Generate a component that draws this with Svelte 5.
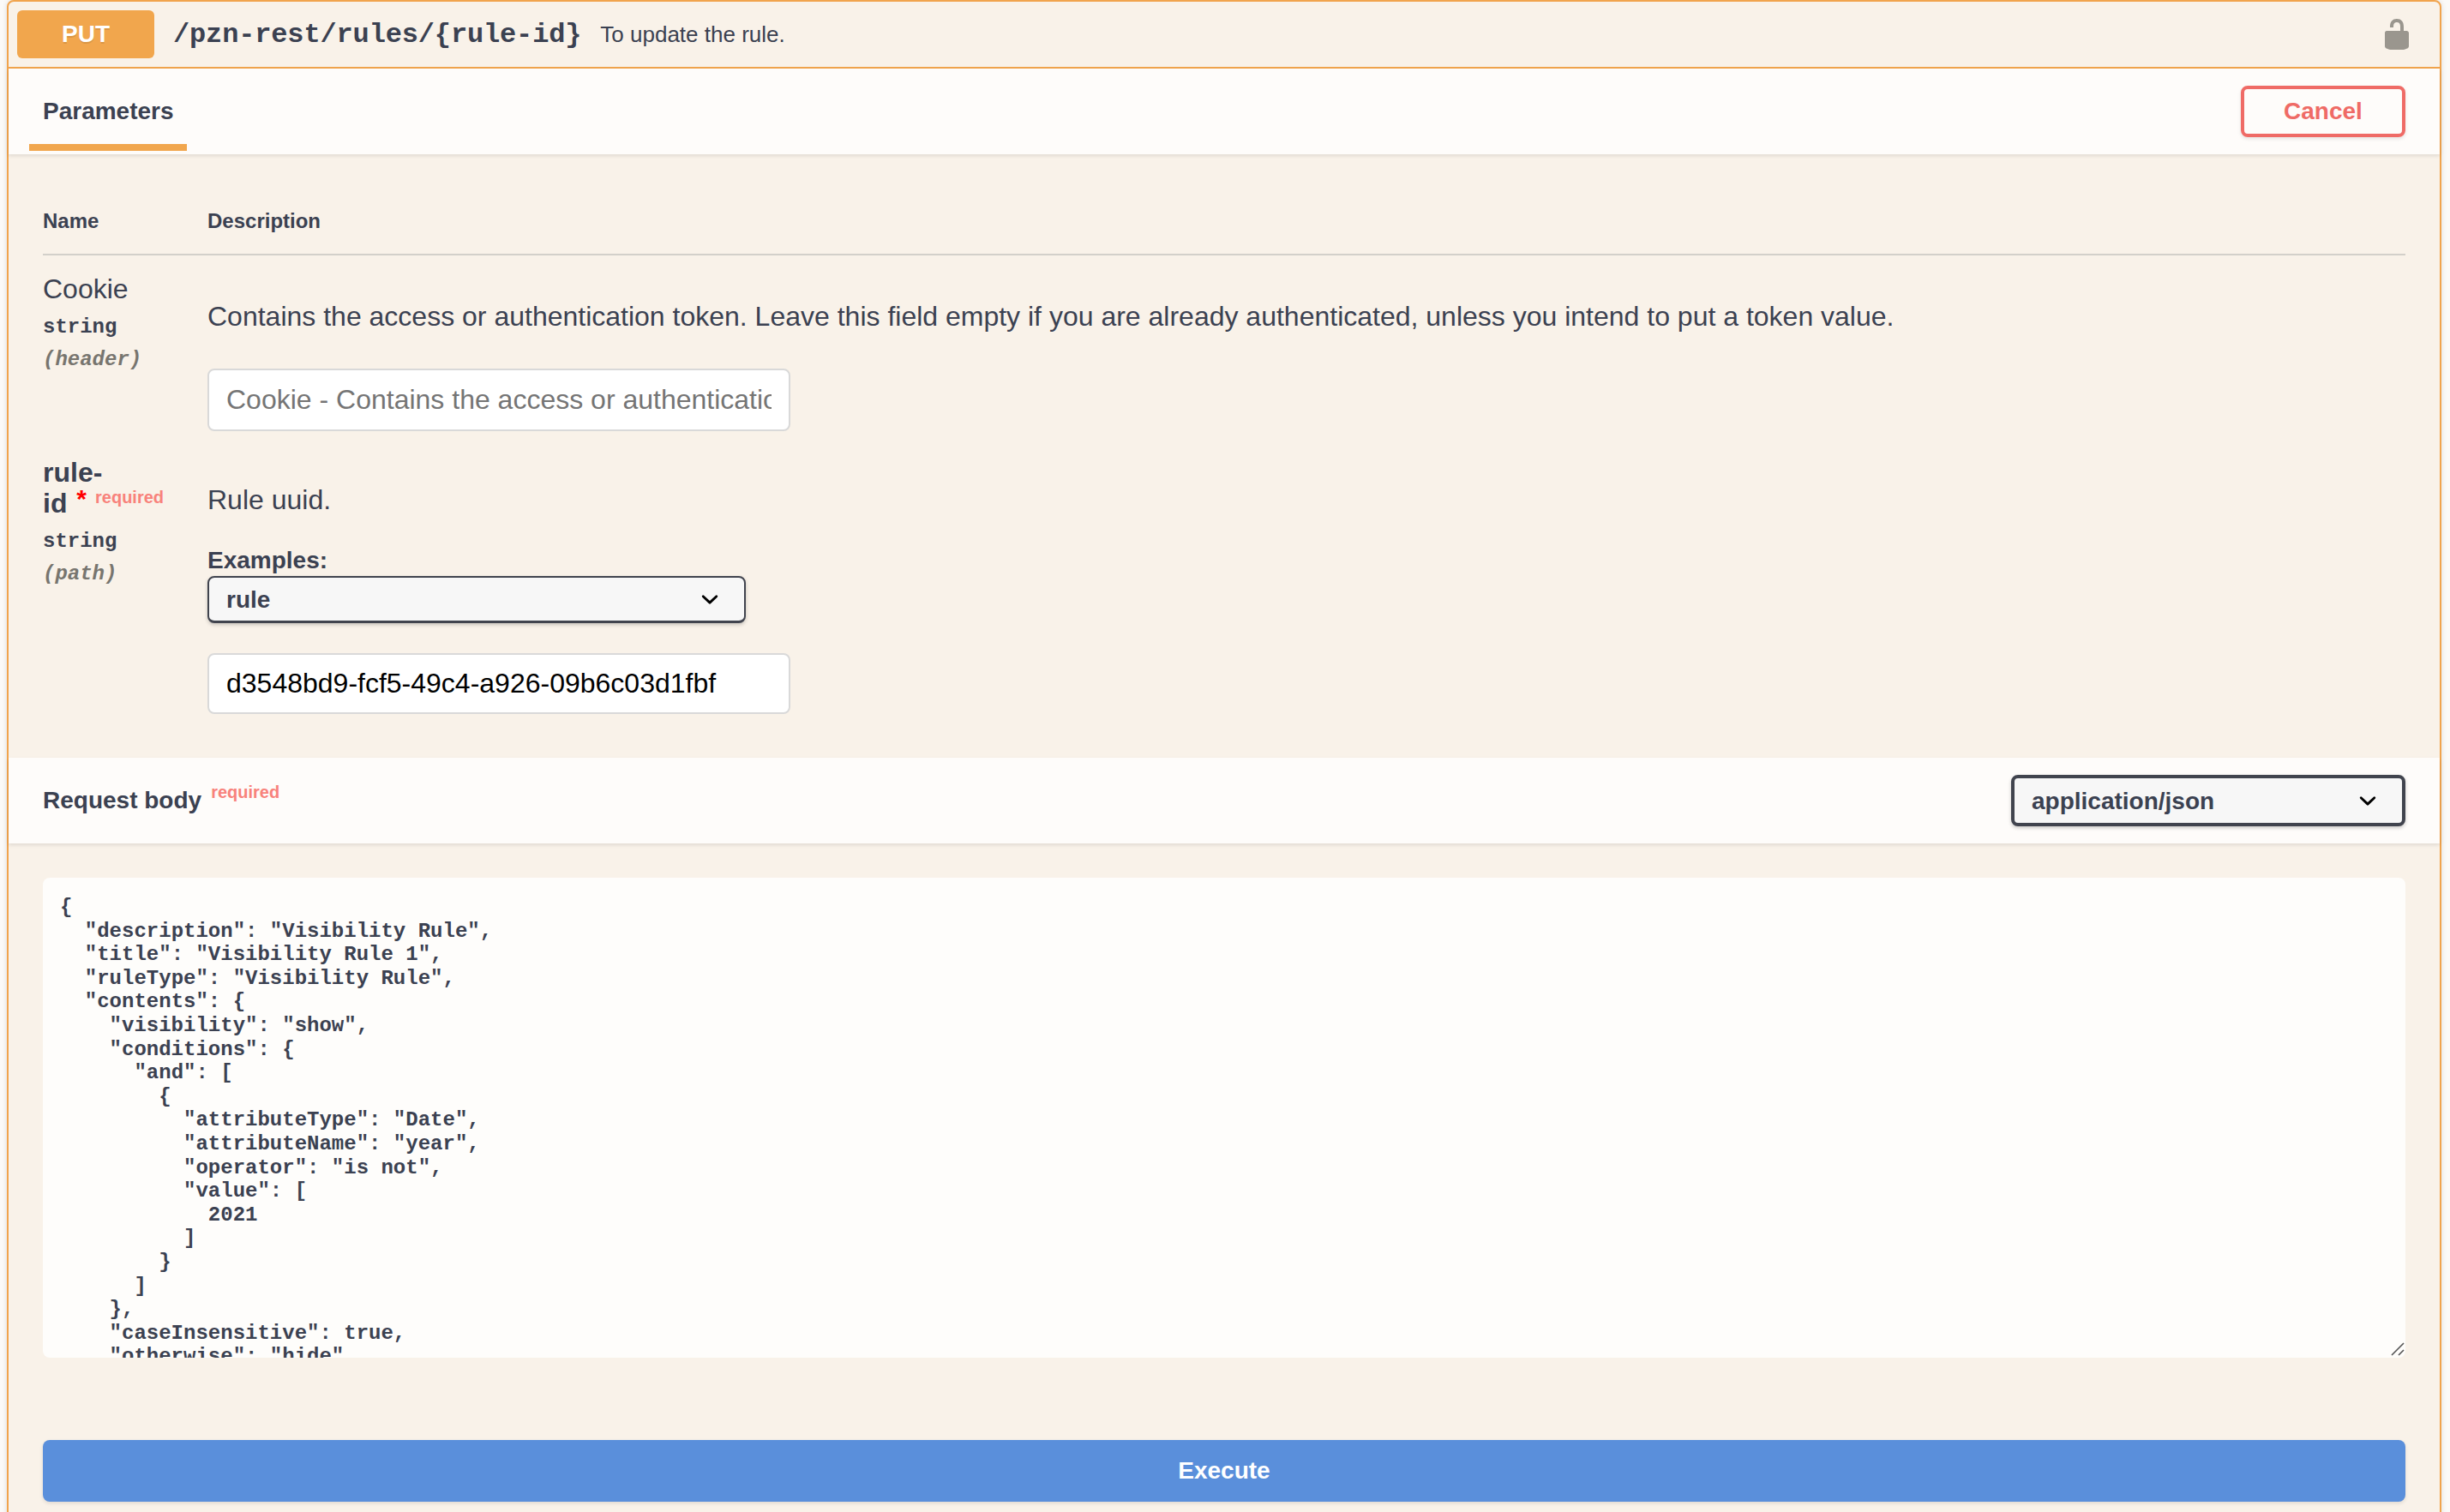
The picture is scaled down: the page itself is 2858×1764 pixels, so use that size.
<script>
  const body = `{
  "description": "Visibility Rule",
  "title": "Visibility Rule 1",
  "ruleType": "Visibility Rule",
  "contents": {
    "visibility": "show",
    "conditions": {
      "and": [
        {
          "attributeType": "Date",
          "attributeName": "year",
          "operator": "is not",
          "value": [
            2021
          ]
        }
      ]
    },
    "caseInsensitive": true,
    "otherwise": "hide"
  }
}`
</script>

<main class="page">
  <section class="opblock">
    <header class="summary">
      <span class="method">PUT</span>
      <span class="path">/pzn-rest/rules/&#123;rule-id&#125;</span>
      <span class="summary-desc">To update the rule.</span>
      <svg class="lock" viewBox="0 0 20 20" aria-hidden="true">
        <path d="M15.8 8H14V5.6C14 2.703 12.665 1 10 1 7.334 1 6 2.703 6 5.6V6h2v-.801C8 3.754 8.797 3 10 3c1.203 0 2 .754 2 2.199V8H4c-.553 0-1 .646-1 1.199V17c0 .549.428 1.139.951 1.307l1.197.387C5.672 18.861 6.55 19 7.1 19h5.8c.549 0 1.428-.139 1.951-.307l1.196-.387c.524-.167.953-.757.953-1.306V9.199C17 8.646 16.352 8 15.8 8z" />
      </svg>
    </header>

    <div class="section-head tabs-head">
      <div class="tab">Parameters</div>
      <button class="cancel">Cancel</button>
    </div>

    <div class="params">
      <div class="param-head">
        <div class="col-name">Name</div>
        <div>Description</div>
      </div>

      <div class="param-row first">
        <div class="col-name">
          <div class="param-name light">Cookie</div>
          <div class="param-type">string</div>
          <div class="param-in">(header)</div>
        </div>
        <div>
          <p class="desc">Contains the access or authentication token. Leave this field empty if you are already authenticated, unless you intend to put a token value.</p>
          <input class="field cookie" type="text" placeholder="Cookie - Contains the access or authentication token. Leave this field empty" />
        </div>
      </div>

      <div class="param-row">
        <div class="col-name">
          <div class="param-name">rule-<br />id <span class="star">*</span><span class="req">required</span></div>
          <div class="param-type">string</div>
          <div class="param-in">(path)</div>
        </div>
        <div>
          <p class="desc">Rule uuid.</p>
          <label class="examples" for="example">Examples:</label>
          <select id="example" class="select short"><option>rule</option></select>
          <input class="field value" type="text" value="d3548bd9-fcf5-49c4-a926-09b6c03d1fbf" />
        </div>
      </div>
    </div>

    <div class="section-head body-head">
      <div class="body-title">Request body<span class="req body-req">required</span></div>
      <select class="select wide"><option>application/json</option></select>
    </div>

    <div class="body-wrap">
      <div class="code-wrap">
        <textarea class="code" readonly value={body}></textarea>
        <svg class="grip" viewBox="0 0 16 16" aria-hidden="true">
          <path d="M1 15 15 1M9 15l6-6" />
        </svg>
      </div>
      <button class="execute">Execute</button>
    </div>
  </section>
</main>

<style>
  :global(body) {
    margin: 0;
    background: #fbfaf8;
    overflow: hidden;
  }

  .page {
    height: 1764px;
    overflow: hidden;
    padding-left: 8px;
    font-family: "Liberation Sans", Arial, sans-serif;
    color: #3b4151;
  }

  .opblock {
    box-sizing: border-box;
    width: 2840px;
    background: #f9f2e9;
    border: 2px solid #f1a44d;
    border-radius: 8px;
    box-shadow: 0 0 6px rgba(0, 0, 0, 0.12);
  }

  .summary {
    box-sizing: border-box;
    height: 78px;
    display: flex;
    align-items: center;
    padding: 0 30px 0 10px;
    border-bottom: 2px solid #f1a44d;
  }

  .method {
    width: 160px;
    height: 56px;
    line-height: 56px;
    text-align: center;
    border-radius: 6px;
    background: #f1a64d;
    color: #fff;
    font-size: 28px;
    font-weight: 700;
    text-shadow: 0 2px 0 rgba(0, 0, 0, 0.1);
  }

  .path {
    margin-left: 22px;
    font-family: "Liberation Mono", monospace;
    font-size: 32px;
    font-weight: 700;
    letter-spacing: -0.15px;
  }

  .summary-desc {
    margin-left: 22px;
    font-size: 26px;
  }

  .lock {
    margin-left: auto;
    width: 40px;
    height: 40px;
    fill: #9a968e;
  }

  .section-head {
    display: flex;
    align-items: center;
    justify-content: space-between;
    background: #fefcfa;
    box-shadow: 0 2px 4px rgba(0, 0, 0, 0.1);
    padding-right: 40px;
  }

  .tabs-head {
    box-sizing: border-box;
    height: 100px;
    padding-left: 24px;
    align-items: flex-start;
  }

  .tab {
    padding: 32px 15px 20px 16px;
    line-height: 36px;
    font-size: 28px;
    font-weight: 700;
    border-bottom: 8px solid #f1a64d;
  }

  .cancel {
    box-sizing: border-box;
    width: 192px;
    height: 60px;
    margin-top: 20px;
    border: 4px solid #ef6b66;
    border-radius: 8px;
    background: transparent;
    color: #ef6b66;
    font-family: inherit;
    font-size: 28px;
    font-weight: 700;
    box-shadow: 0 2px 4px rgba(0, 0, 0, 0.1);
  }

  .params {
    padding: 0 40px 51px;
  }

  .param-head {
    display: flex;
    padding-top: 63px;
    padding-bottom: 23px;
    line-height: 30px;
    font-size: 24px;
    font-weight: 700;
    border-bottom: 2px solid #d3d0ca;
  }

  .col-name {
    flex: none;
    width: 192px;
    box-sizing: border-box;
  }

  .param-row {
    display: flex;
    padding-top: 30px;
  }

  .param-row.first {
    padding-top: 21px;
  }

  .param-name {
    font-size: 32px;
    font-weight: 700;
    line-height: 36px;
    width: 160px;
  }

  .param-name.light {
    font-weight: 400;
  }

  .star {
    color: #f00;
    font-size: 30px;
    line-height: 0;
    position: relative;
    top: -6px;
    margin-left: 2px;
  }

  .req {
    color: #f8827b;
    font-size: 20px;
    font-weight: 700;
    line-height: 0;
    position: relative;
    top: -11px;
    margin-left: 10px;
  }

  .param-type {
    margin-top: 12px;
    font-family: "Liberation Mono", monospace;
    font-size: 24px;
    font-weight: 700;
    line-height: 30px;
  }

  .param-in {
    margin-top: 8px;
    font-family: "Liberation Mono", monospace;
    font-size: 24px;
    font-weight: 700;
    font-style: italic;
    line-height: 30px;
    color: #77756f;
  }

  .desc {
    margin: 32px 0 0;
    font-size: 32px;
    line-height: 36px;
  }

  .field {
    display: block;
    box-sizing: border-box;
    width: 680px;
    height: 73px;
    padding: 0 20px;
    border: 2px solid #d9d9d9;
    border-radius: 8px;
    background: #fff;
    font-family: inherit;
    font-size: 32px;
    color: #000;
    outline: none;
  }

  .field::placeholder {
    color: #757575;
  }

  .cookie {
    margin-top: 43px;
  }

  .value {
    margin-top: 35px;
    height: 71px;
  }

  .examples {
    display: block;
    margin-top: 35px;
    font-size: 28px;
    font-weight: 700;
    line-height: 36px;
  }

  .select {
    box-sizing: border-box;
    appearance: none;
    display: block;
    padding: 0 20px;
    border: 4px solid #41444e;
    border-radius: 8px;
    background: #f7f7f7 url("data:image/svg+xml;charset=utf-8,%3Csvg xmlns='http://www.w3.org/2000/svg' viewBox='0 0 20 20'%3E%3Cpath d='M13.418 7.859a.695.695 0 0 1 .978 0 .68.68 0 0 1 0 .969l-3.908 3.83a.697.697 0 0 1-.979 0l-3.908-3.83a.68.68 0 0 1 0-.969.695.695 0 0 1 .978 0L10 11l3.418-3.141z'/%3E%3C/svg%3E") right 20px center / 40px no-repeat;
    font-family: inherit;
    font-size: 28px;
    font-weight: 700;
    color: #3b4151;
    box-shadow: 0 2px 4px rgba(0, 0, 0, 0.2);
  }

  .short {
    width: 628px;
    height: 55px;
    border-width: 2px;
    border-bottom-width: 3px;
  }

  .wide {
    width: 460px;
    height: 60px;
  }

  .body-head {
    box-sizing: border-box;
    height: 100px;
    padding-left: 40px;
  }

  .body-title {
    font-size: 28px;
    font-weight: 700;
  }

  .body-req {
    top: -12px;
    margin-left: 11px;
  }

  .body-wrap {
    padding: 40px 40px 30px;
  }

  .code-wrap {
    position: relative;
  }

  .code {
    display: block;
    box-sizing: border-box;
    width: 100%;
    height: 560px;
    padding: 21px 20px 20px;
    border: none;
    border-radius: 8px;
    outline: none;
    resize: none;
    background: #fefdfb;
    font-family: "Liberation Mono", monospace;
    font-size: 24px;
    font-weight: 700;
    line-height: 27.6px;
    color: #3b4151;
    scrollbar-width: none;
  }

  .grip {
    position: absolute;
    right: 1px;
    bottom: 2px;
    width: 16px;
    height: 16px;
    fill: none;
    stroke: #555;
    stroke-width: 1.6;
  }

  .execute {
    display: block;
    width: 100%;
    height: 72px;
    margin-top: 96px;
    border: none;
    border-radius: 8px;
    background: #5a8fdb;
    color: #fff;
    font-family: inherit;
    font-size: 28px;
    font-weight: 700;
    box-shadow: 0 2px 4px rgba(0, 0, 0, 0.1);
  }
</style>
